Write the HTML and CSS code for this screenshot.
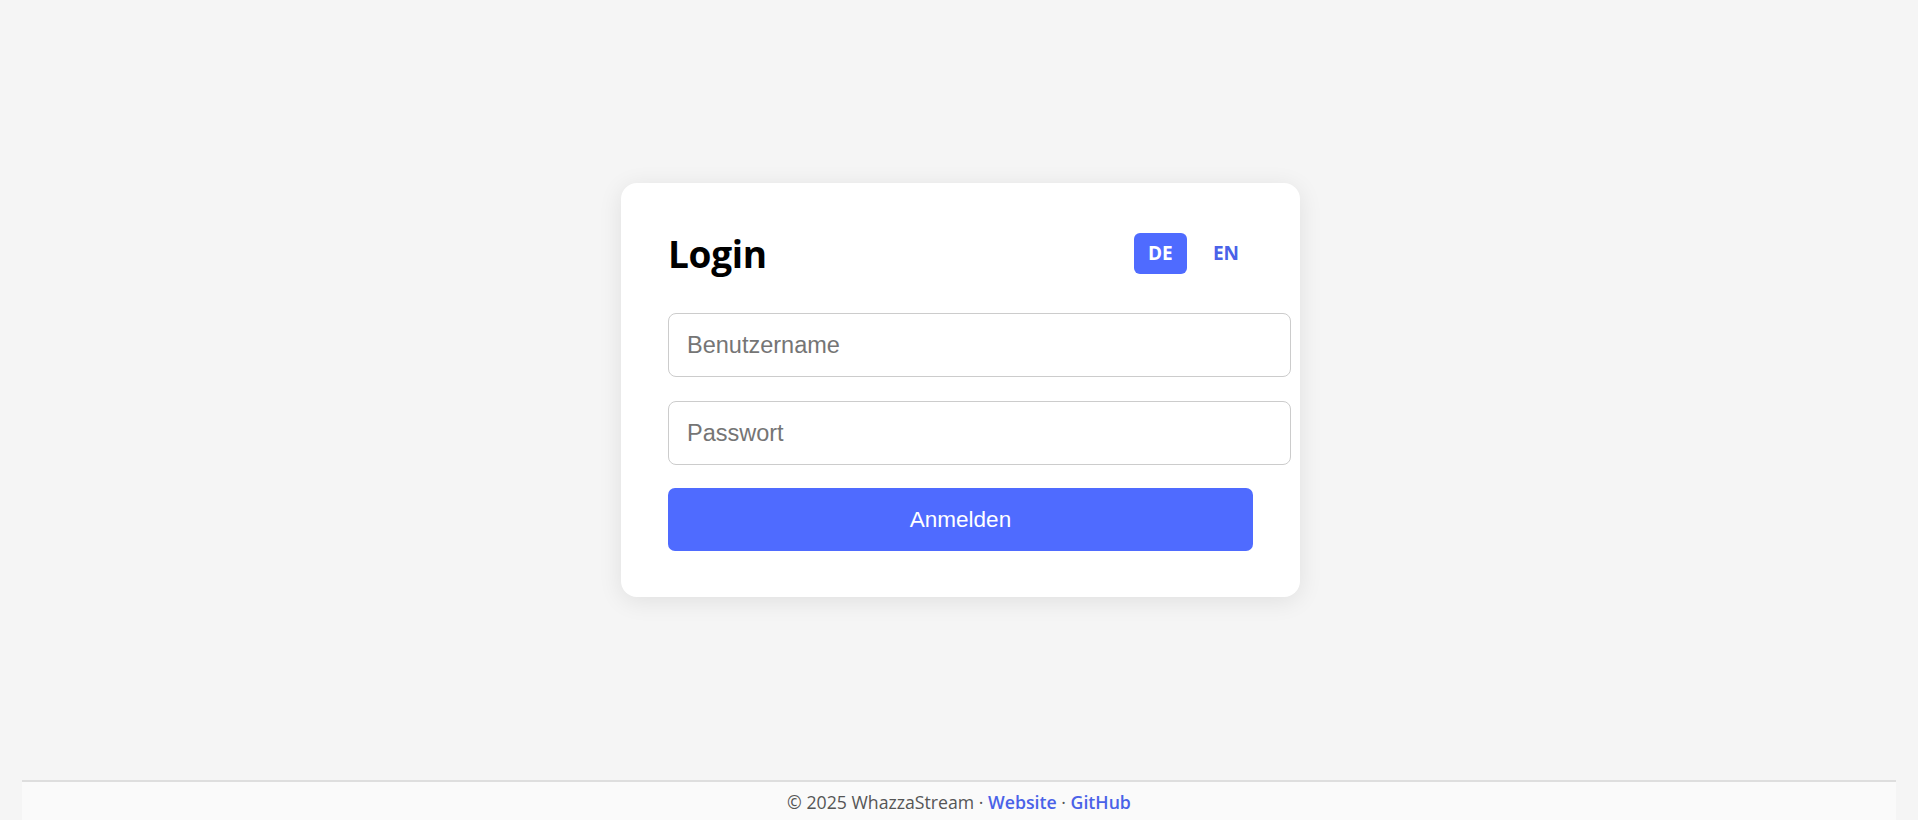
FILE: index.html
```html
<!DOCTYPE html>
<html lang="de">
<head>
<meta charset="utf-8">
<title>Login – WhazzaStream</title>
<link rel="stylesheet" href="styles.css">
</head>
<body>
<div class="page">
  <main class="main">
    <div class="card">
      <div class="card-header">
        <h1 class="title">Login</h1>
        <div class="lang">
          <button class="lang-btn active" type="button">DE</button>
          <button class="lang-btn" type="button">EN</button>
        </div>
      </div>
      <form class="form">
        <input class="field" type="text" placeholder="Benutzername">
        <input class="field field-last" type="password" placeholder="Passwort">
        <button class="submit" type="button">Anmelden</button>
      </form>
    </div>
  </main>
  <footer class="footer">
    © 2025 WhazzaStream · <a class="footer-link" href="#">Website</a> · <a class="footer-link" href="#">GitHub</a>
  </footer>
</div>
</body>
</html>
```

FILE: styles.css
```css
* { box-sizing: border-box; }

html, body {
  margin: 0;
  padding: 0;
  background: #f5f5f5;
}

body {
  font-family: "Open Sans", "Noto Sans", sans-serif;
  color: #000;
}

.page {
  min-height: 100vh;
  display: flex;
  flex-direction: column;
}

.main {
  flex: 1;
  display: flex;
  align-items: center;
  justify-content: center;
  padding-left: 3px;
}

.card {
  width: 679px;
  background: #fff;
  border-radius: 16px;
  padding: 46px 47px;
  box-shadow: 0 4px 24px rgba(0, 0, 0, 0.09);
}

.card-header {
  display: flex;
  align-items: center;
  justify-content: space-between;
  height: 49px;
  margin-bottom: 35px;
}

.title {
  margin: 0;
  font-size: 37px;
  line-height: 49px;
  font-weight: 700;
  letter-spacing: -0.3px;
}

.lang {
  display: flex;
  gap: 12px;
}

.lang-btn {
  font-family: "Open Sans", "Noto Sans", sans-serif;
  font-size: 19px;
  font-weight: 700;
  line-height: 27px;
  padding: 7px 14px;
  border: none;
  border-radius: 6px;
  background: transparent;
  color: #4a62e8;
  min-width: 53px;
}

.lang-btn.active {
  background: #4f6bff;
  color: #fff;
}

.form {
  display: flex;
  flex-direction: column;
  align-items: flex-start;
}

.field {
  box-sizing: content-box;
  width: 100%;
  font-family: "Liberation Sans", Arial, sans-serif;
  font-size: 23.5px;
  line-height: 28px;
  padding: 17px 18px 17px 18px;
  border: 1px solid #cccccc;
  border-radius: 8px;
  background: #fff;
  margin: 0 0 24px 0;
  outline: none;
}

.field-last {
  margin-bottom: 23px;
}

.field::placeholder {
  color: #757575;
}

.submit {
  width: 100%;
  font-family: "Liberation Sans", Arial, sans-serif;
  font-size: 22.5px;
  line-height: 27px;
  padding: 18px 0;
  border: none;
  border-radius: 7px;
  background: #4f6bff;
  color: #fff;
}

.footer {
  margin: 0 22px;
  border-top: 2px solid #dedede;
  background: #fafafa;
  text-align: center;
  font-size: 17.7px;
  line-height: 23px;
  padding: 9px 0 6px;
  color: #555;
}

.footer-link {
  color: #4a62e8;
  font-weight: 600;
  text-decoration: none;
}
```
